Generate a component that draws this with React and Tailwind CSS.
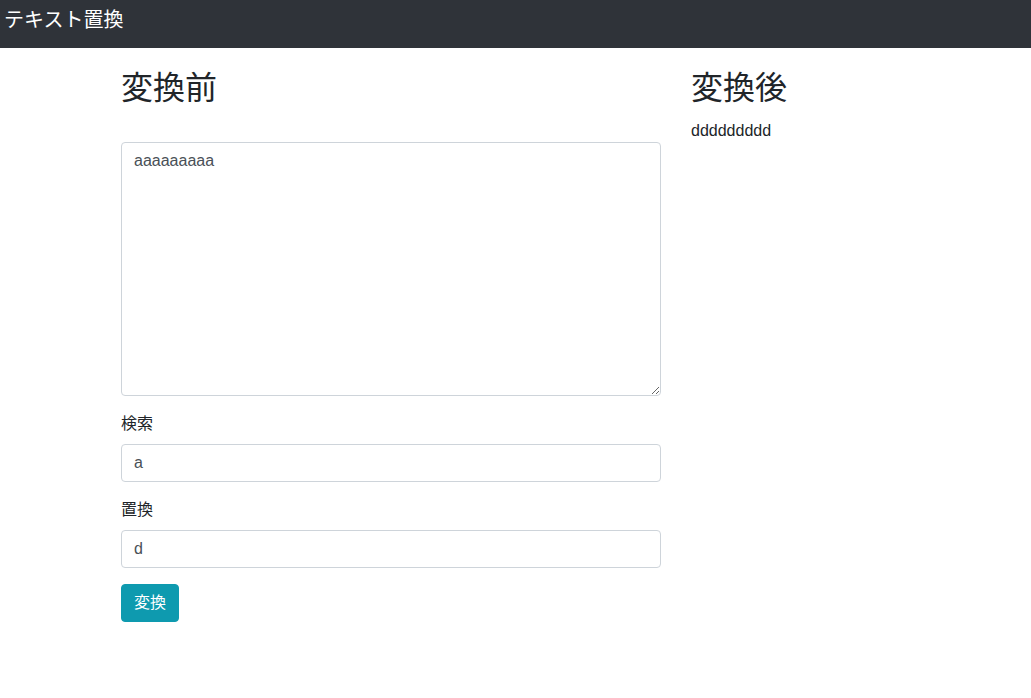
import { useState } from 'react'

const font = { fontFamily: '"Liberation Sans", "Noto Sans CJK JP", sans-serif' }

export default function App() {
  const [source, setSource] = useState('aaaaaaaaa')
  const [search, setSearch] = useState('a')
  const [replace, setReplace] = useState('d')
  const [result, setResult] = useState('ddddddddd')

  const run = () => setResult(search ? source.split(search).join(replace) : source)

  return (
    <div className="min-h-[698px] bg-white text-[#212529]" style={font}>
      <nav className="h-12 bg-[#2f3339] flex items-center pl-1">
        <span className="text-xl text-white leading-none -mt-[8px]">テキスト置換</span>
      </nav>

      <div className="flex pl-[121px] pt-[21px]">
        <div className="w-[540px]">
          <h2 className="text-[32px] leading-[38px] font-normal mb-2">変換前</h2>
          <div className="mt-[35px] mb-4">
            <textarea
              value={source}
              onChange={(e) => setSource(e.target.value)}
              className="block w-full h-[254px] border border-[#ced4da] rounded px-3 py-1.5 text-base leading-6 text-[#495057] outline-none"
            />
          </div>
          <div className="mb-4">
            <label className="block text-base leading-6 mb-2">検索</label>
            <input
              value={search}
              onChange={(e) => setSearch(e.target.value)}
              className="block w-full h-[38px] border border-[#ced4da] rounded px-3 text-base text-[#495057] outline-none"
            />
          </div>
          <div className="mb-4">
            <label className="block text-base leading-6 mb-2">置換</label>
            <input
              value={replace}
              onChange={(e) => setReplace(e.target.value)}
              className="block w-full h-[38px] border border-[#ced4da] rounded px-3 text-base text-[#495057] outline-none"
            />
          </div>
          <button
            onClick={run}
            className="h-[38px] px-3 rounded border border-[#0e9aaf] bg-[#0e9aaf] text-white text-base leading-6"
          >
            変換
          </button>
        </div>

        <div className="ml-[30px]">
          <h2 className="text-[32px] leading-[38px] font-normal mb-2">変換後</h2>
          <p className="text-base leading-6 mt-3">{result}</p>
        </div>
      </div>
    </div>
  )
}
